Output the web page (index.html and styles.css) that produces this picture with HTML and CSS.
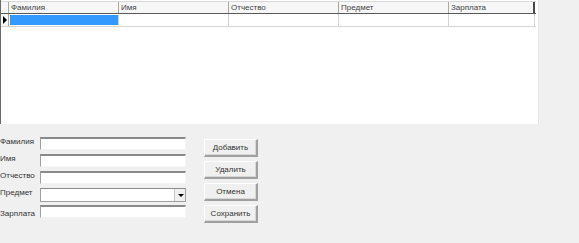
FILE: index.html
```html
<!DOCTYPE html>
<html lang="ru">
<head>
    <meta charset="UTF-8">
    <title>Преподаватели</title>
    <link rel="stylesheet" href="styles.css">
</head>
<body>
    <div class="grid">
        <div class="grid-head">
            <div class="corner"></div>
            <div class="hcell">Фамилия</div>
            <div class="hcell">Имя</div>
            <div class="hcell">Отчество</div>
            <div class="hcell">Предмет</div>
            <div class="hcell last">Зарплата</div>
        </div>
        <div class="grid-row">
            <div class="rowhead"><span class="arrow"></span></div>
            <div class="cell selected"></div>
            <div class="cell"></div>
            <div class="cell"></div>
            <div class="cell"></div>
            <div class="cell"></div>
        </div>
    </div>

    <div class="editor">
        <div class="fields">
            <label class="lbl">Фамилия</label>
            <div class="textbox"></div>
            <label class="lbl">Имя</label>
            <div class="textbox"></div>
            <label class="lbl">Отчество</label>
            <div class="textbox"></div>
            <label class="lbl">Предмет</label>
            <div class="textbox combo"><span class="drop"></span></div>
            <label class="lbl low">Зарплата</label>
            <div class="textbox"></div>
        </div>
        <div class="buttons">
            <button class="btn">Добавить</button>
            <button class="btn">Удалить</button>
            <button class="btn">Отмена</button>
            <button class="btn">Сохранить</button>
        </div>
    </div>
</body>
</html>
```

FILE: styles.css
```css
body {
    margin: 0;
    background-color: #f0f0f0;
    font-family: "Liberation Sans", Arial, sans-serif;
    font-size: 8px;
    color: #333;
    width: 579px;
    height: 243px;
    overflow: hidden;
}
.grid {
    width: 539px;
    height: 124px;
    background: white;
    border-left: 1px solid #6a6a6a;
    border-right: 1px solid #e4e4e4;
    padding-top: 1px;
    box-sizing: border-box;
}
.grid-head, .grid-row {
    display: grid;
    grid-template-columns: 8px 110px 110px 110px 110px 86px;
}
.grid-head {
    height: 13px;
    border-top: 1px solid #d8d8d8;
    border-bottom: 1px solid #5a5a5a;
    box-sizing: border-box;
    width: 535px;
}
.corner, .hcell {
    background: #f7f7f7;
    border-right: 1px solid #a8a8a8;
}
.hcell {
    padding-left: 2px;
    line-height: 11px;
    color: #444;
    white-space: nowrap;
}
.hcell.last {
    border-right: 2px solid #4a4a4a;
}
.grid-row {
    height: 13px;
    width: 535px;
    border-bottom: 1px solid #d4d4d4;
    box-sizing: border-box;
}
.rowhead {
    background: #f7f7f7;
    border-right: 1px solid #a8a8a8;
    position: relative;
}
.arrow {
    position: absolute;
    left: 2px;
    top: 2px;
    border-left: 4px solid #000;
    border-top: 4px solid transparent;
    border-bottom: 4px solid transparent;
}
.cell {
    border-right: 1px solid #d4d4d4;
}
.cell.selected {
    background: #3399ff;
    margin: 1px 0 1px 1px;
}
.editor {
    display: flex;
    padding-top: 13px;
}
.fields {
    display: grid;
    grid-template-columns: 40px 146px;
    grid-auto-rows: 13px;
    row-gap: 4px;
}
.lbl {
    line-height: 9px;
    white-space: nowrap;
}
.lbl.low {
    line-height: 17px;
}
.textbox {
    background: white;
    border-top: 2px solid #8a8a8a;
    border-left: 1px solid #a0a0a0;
    border-right: 1px solid #f4f4f4;
    border-bottom: 1px solid #f4f4f4;
    box-sizing: border-box;
}
.combo {
    height: 14px;
    position: relative;
    border-right: 1px solid #a0a0a0;
    border-bottom: 1px solid #a0a0a0;
    border-top: 1px solid #8a8a8a;
}
.drop {
    position: absolute;
    right: 0;
    top: 0;
    width: 11px;
    height: 12px;
    background: #f0f0f0;
    border-left: 1px solid #c8c8c8;
    box-sizing: border-box;
}
.drop::after {
    content: "";
    position: absolute;
    left: 3px;
    top: 5px;
    border-top: 3px solid #000;
    border-left: 3px solid transparent;
    border-right: 3px solid transparent;
}
.buttons {
    display: flex;
    flex-direction: column;
    gap: 4px;
    margin-left: 18px;
    padding-top: 2px;
}
.btn {
    width: 54px;
    height: 18px;
    padding: 0;
    background: #f0f0f0;
    font-family: "Liberation Sans", Arial, sans-serif;
    font-size: 8px;
    color: #333;
    border-top: 1px solid #ffffff;
    border-left: 1px solid #ffffff;
    border-right: 2px solid #a0a0a0;
    border-bottom: 2px solid #a0a0a0;
    box-shadow: inset -1px -1px 0 #d8d8d8;
}
```
